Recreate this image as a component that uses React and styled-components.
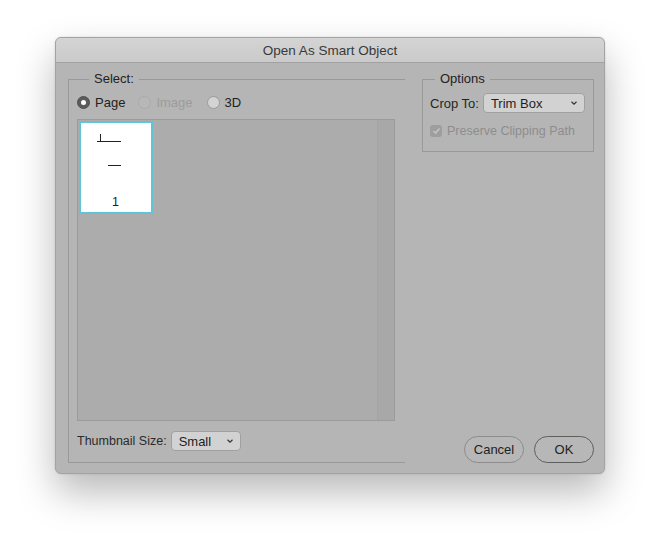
import styled, { createGlobalStyle } from 'styled-components'

const GlobalStyle = createGlobalStyle`
    html, body {
        margin: 0;
        padding: 0;
        background: #ffffff;
        font-family: "Liberation Sans", Arial, sans-serif;
    }
`

const Page = styled.div`
    width: 660px;
    height: 547px;
    padding: 37px 0 0 55px;
    box-sizing: border-box;
`

const Dialog = styled.div`
    width: 550px;
    height: 437px;
    display: flex;
    flex-direction: column;
    box-sizing: border-box;
    background: #b5b5b5;
    border: 1px solid #a3a3a3;
    border-radius: 6px;
    box-shadow: 0 18px 38px rgba(0, 0, 0, 0.28), 0 0 2px rgba(0, 0, 0, 0.15);
    overflow: hidden;
`

const TitleBar = styled.div`
    height: 24px;
    flex: none;
    display: flex;
    align-items: center;
    justify-content: center;
    background: linear-gradient(#d4d4d4, #cacaca);
    border-bottom: 1px solid #a2a2a2;
    font-size: 13.5px;
    color: #3a3a3a;
`

const Body = styled.div`
    flex: 1;
    display: flex;
    padding: 8px 9px 10px 12px;
`

const LeftColumn = styled.div`
    width: 337px;
    margin-right: 17px;
`

const RightColumn = styled.div`
    width: 172px;
    display: flex;
    flex-direction: column;
    justify-content: space-between;
`

const Group = styled.fieldset`
    margin: 0;
    padding: 0 0 0 ${(p) => p.$pad}px;
    box-sizing: border-box;
    height: ${(p) => p.$height}px;
    border: 1px solid #999999;
    border-right: ${(p) => (p.$open ? 'none' : '1px solid #999999')};
    display: flex;
    flex-direction: column;
`

const Legend = styled.legend`
    margin-left: ${(p) => p.$offset}px;
    padding: 0 5px;
    line-height: 16px;
    font-size: 13px;
    color: #222222;
`

const RadioRow = styled.div`
    display: flex;
    align-items: center;
    height: 16px;
    margin-top: 7px;
    font-size: 13px;
`

const RadioItem = styled.label`
    display: flex;
    align-items: center;
    margin-right: ${(p) => p.$gap}px;
    color: ${(p) => (p.$disabled ? '#9c9c9c' : '#222222')};
`

const RadioDot = styled.span`
    width: 13px;
    height: 13px;
    box-sizing: border-box;
    border-radius: 50%;
    margin-right: 5px;
    position: relative;
    background: ${(p) => (p.$checked ? '#5b5b5b' : p.$disabled ? '#b7b7b7' : '#d3d3d3')};
    border: 1px solid ${(p) => (p.$checked ? '#505050' : p.$disabled ? '#aaaaaa' : '#9a9a9a')};

    &::after {
        content: '';
        display: ${(p) => (p.$checked ? 'block' : 'none')};
        position: absolute;
        left: 3px;
        top: 3px;
        width: 5px;
        height: 5px;
        border-radius: 50%;
        background: #ffffff;
    }
`

const Preview = styled.div`
    margin-top: 9px;
    width: 318px;
    height: 302px;
    box-sizing: border-box;
    border: 1px solid #9b9b9b;
    background: #acacac;
    display: flex;
`

const Thumbs = styled.div`
    flex: 1;
    padding: 1px 0 0 1px;
`

const Scrollbar = styled.div`
    width: 16px;
    background: #a8a8a8;
    border-left: 1px solid #a4a4a4;
`

const Thumb = styled.div`
    width: 74px;
    height: 93px;
    box-sizing: border-box;
    border: 2px solid #62c3d8;
    background: #ffffff;
    position: relative;
`

const ThumbLabel = styled.span`
    position: absolute;
    left: 31px;
    top: 72px;
    font-size: 12.5px;
    color: #222222;
`

const SizeRow = styled.div`
    display: flex;
    align-items: center;
    margin-top: 10px;
    font-size: 12.5px;
    color: #2a2a2a;
`

const SelectBox = styled.div`
    width: ${(p) => p.$width}px;
    height: 20px;
    box-sizing: border-box;
    margin-left: ${(p) => p.$left}px;
    padding: 0 6px 0 7px;
    display: flex;
    align-items: center;
    justify-content: space-between;
    background: #d2d2d2;
    border: 1px solid #a0a0a0;
    border-radius: 4px;
    font-size: 13px;
    color: #1e1e1e;
`

const CropRow = styled.div`
    display: flex;
    align-items: center;
    margin-top: 6px;
    font-size: 13px;
    color: #252525;
`

const CheckRow = styled.div`
    display: flex;
    align-items: center;
    margin-top: 11px;
    font-size: 12.5px;
    color: #8d8d8d;
`

const CheckBox = styled.span`
    width: 12px;
    height: 12px;
    border-radius: 3px;
    background: #9e9e9e;
    margin-right: 5px;
    display: flex;
    align-items: center;
    justify-content: center;
`

const ButtonRow = styled.div`
    display: flex;
    justify-content: flex-end;
    gap: 10px;
`

const Button = styled.button`
    width: 60px;
    height: 27px;
    box-sizing: border-box;
    border-radius: 14px;
    background: #b7b7b7;
    border: ${(p) => (p.$primary ? '1.5px solid #5e5e5e' : '1px solid #8c8c8c')};
    font-family: inherit;
    font-size: 13px;
    color: #222222;
    padding: 0;
`

function Chevron() {
    return (
        <svg width="8" height="6" viewBox="0 0 8 6">
            <path d="M1.5 1.8 L4 4.2 L6.5 1.8" fill="none" stroke="#333" strokeWidth="1.2" />
        </svg>
    )
}

export default function App() {
    return (
        <Page>
            <GlobalStyle />
            <Dialog>
                <TitleBar>Open As Smart Object</TitleBar>
                <Body>
                    <LeftColumn>
                        <Group $open $pad={8} $height={392}>
                            <Legend $offset={12}>Select:</Legend>
                            <RadioRow>
                                <RadioItem $gap={13}>
                                    <RadioDot $checked />
                                    Page
                                </RadioItem>
                                <RadioItem $gap={14} $disabled>
                                    <RadioDot $disabled />
                                    Image
                                </RadioItem>
                                <RadioItem $gap={0}>
                                    <RadioDot />
                                    3D
                                </RadioItem>
                            </RadioRow>
                            <Preview>
                                <Thumbs>
                                    <Thumb>
                                        <svg width="70" height="89" viewBox="0 0 70 89">
                                            <path d="M16 18.5 H40 M19.5 11 V18.5 M27 42.5 H40" stroke="#222" strokeWidth="1" fill="none" />
                                        </svg>
                                        <ThumbLabel>1</ThumbLabel>
                                    </Thumb>
                                </Thumbs>
                                <Scrollbar />
                            </Preview>
                            <SizeRow>
                                Thumbnail Size:
                                <SelectBox $width={70} $left={4}>
                                    Small
                                    <Chevron />
                                </SelectBox>
                            </SizeRow>
                        </Group>
                    </LeftColumn>
                    <RightColumn>
                        <Group $pad={7} $height={81}>
                            <Legend $offset={5}>Options</Legend>
                            <CropRow>
                                Crop To:
                                <SelectBox $width={102} $left={4}>
                                    Trim Box
                                    <Chevron />
                                </SelectBox>
                            </CropRow>
                            <CheckRow>
                                <CheckBox>
                                    <svg width="9" height="8" viewBox="0 0 9 8">
                                        <path d="M1.5 4 L3.6 6 L7.5 1.5" fill="none" stroke="#c4c4c4" strokeWidth="1.6" />
                                    </svg>
                                </CheckBox>
                                Preserve Clipping Path
                            </CheckRow>
                        </Group>
                        <ButtonRow>
                            <Button>Cancel</Button>
                            <Button $primary>OK</Button>
                        </ButtonRow>
                    </RightColumn>
                </Body>
            </Dialog>
        </Page>
    )
}
